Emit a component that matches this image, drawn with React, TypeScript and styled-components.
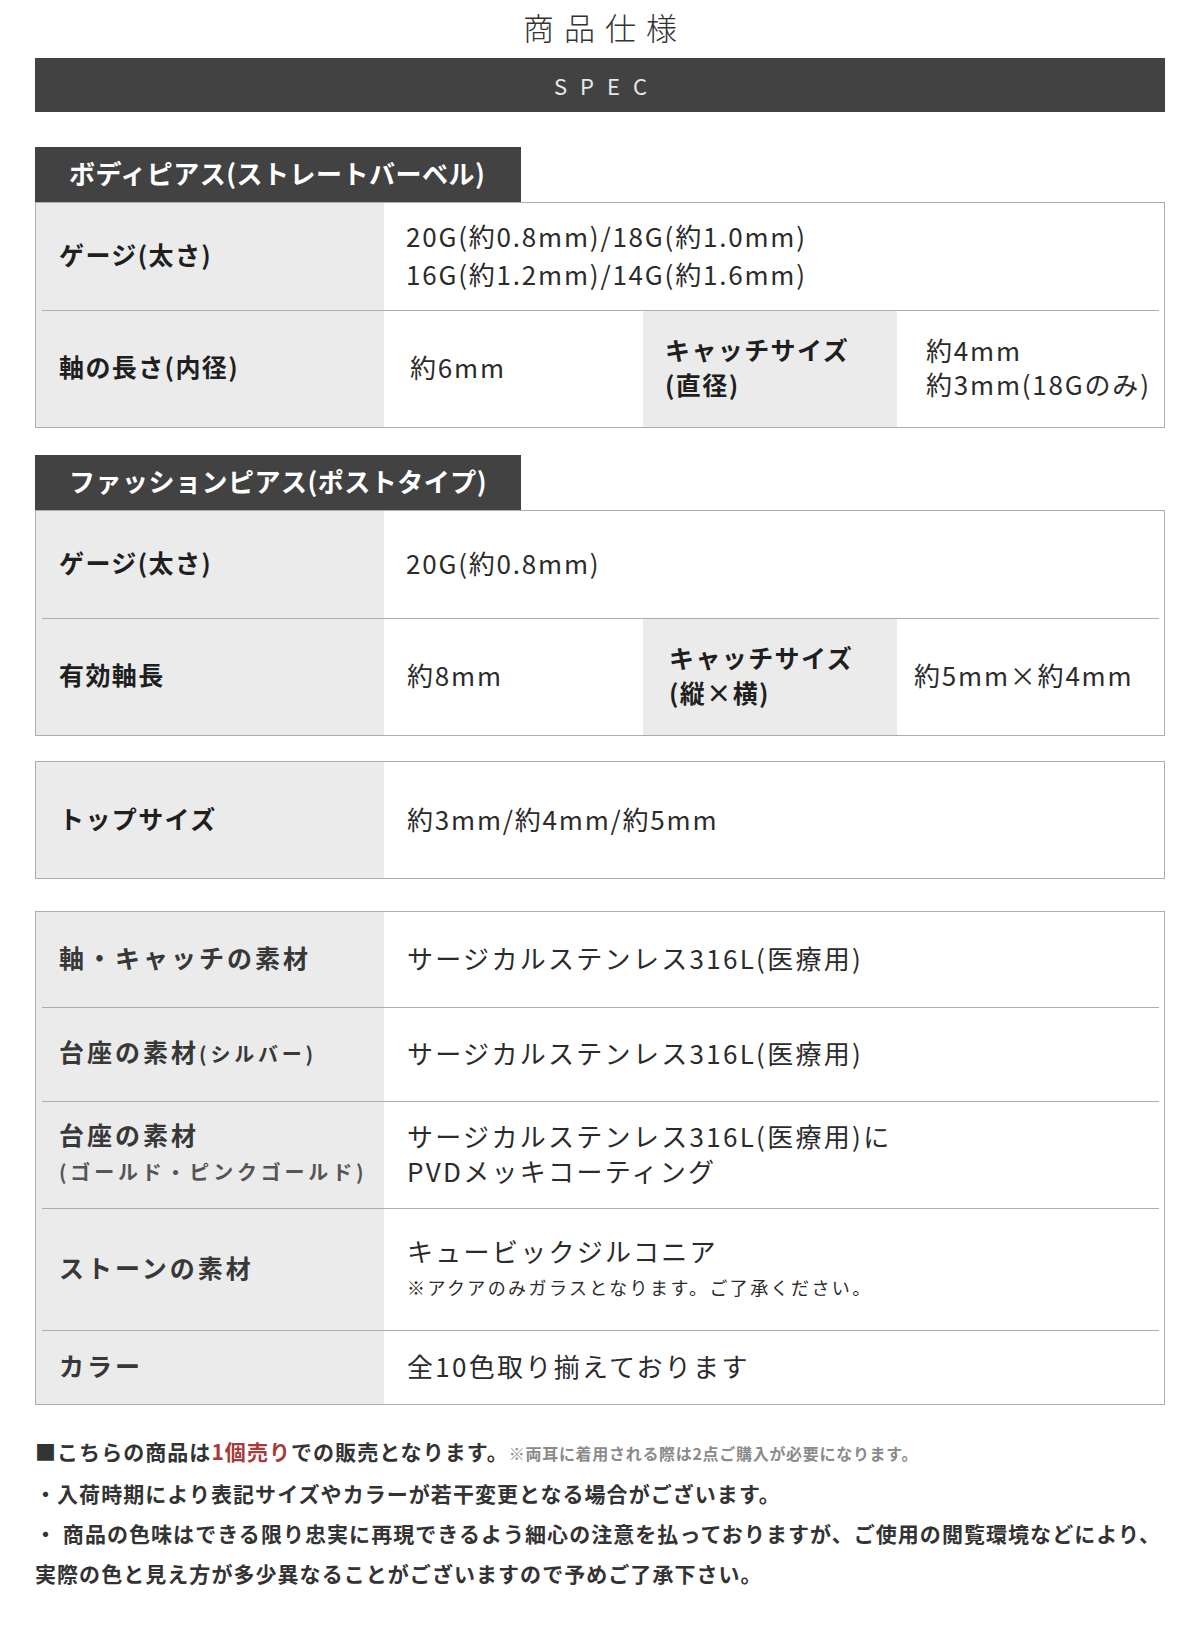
import React from 'react';
import styled, { createGlobalStyle } from 'styled-components';

const GlobalStyle = createGlobalStyle`
  body {
    margin: 0;
    background: #fff;
    font-family: 'Noto Sans CJK JP', 'Noto Sans', sans-serif;
    color: #222;
  }
`;

const Page = styled.div`
  width: 1200px;
  box-sizing: border-box;
  padding: 0 35px 40px;
`;

const Title = styled.h1`
  margin: 0;
  height: 58px;
  box-sizing: border-box;
  padding: 0 0 5px 10px;
  display: flex;
  align-items: center;
  justify-content: center;
  font-size: 31px;
  font-weight: 300;
  letter-spacing: 10px;
  color: #333;
`;

const SpecBar = styled.div`
  height: 54px;
  background: #424242;
  display: flex;
  align-items: center;
  justify-content: center;
  padding-left: 14px;
  font-size: 22px;
  font-weight: 400;
  letter-spacing: 13px;
  color: #e8e8e8;
`;

const SectionTab = styled.div<{ $top: number }>`
  margin-top: ${(p) => p.$top}px;
  width: 486px;
  height: 55px;
  box-sizing: border-box;
  padding: 0 0 4px 34px;
  display: flex;
  align-items: center;
  background: #424242;
  color: #fff;
  font-size: 26px;
  font-weight: 700;
  letter-spacing: 0.5px;
`;

const Table = styled.div<{ $top?: number }>`
  margin-top: ${(p) => p.$top ?? 0}px;
  border: 1px solid #adadad;
`;

const Row = styled.div<{ $h: number; $split?: boolean }>`
  position: relative;
  display: grid;
  grid-template-columns: ${(p) => (p.$split ? '348px 259px 254px 1fr' : '348px 1fr')};
  height: ${(p) => p.$h}px;

  &:not(:first-child)::before {
    content: '';
    position: absolute;
    top: 0;
    left: 6px;
    right: 5px;
    height: 1px;
    background: #adadad;
  }
`;

const Label = styled.div<{ $spaced?: boolean; $pad?: number }>`
  background: #ebebeb;
  display: flex;
  flex-direction: column;
  justify-content: center;
  padding: 0 0 4px ${(p) => p.$pad ?? 23}px;
  font-size: 25px;
  font-weight: 700;
  line-height: 35px;
  letter-spacing: ${(p) => (p.$spaced ? '3px' : '1.4px')};
  color: ${(p) => (p.$spaced ? '#383838' : '#1f1f1f')};
`;

const Small = styled.span<{ $muted?: boolean }>`
  font-size: 20px;
  letter-spacing: 3.8px;
  color: ${(p) => (p.$muted ? '#555' : 'inherit')};
`;

const Value = styled.div<{ $pad?: number; $lh?: number; $ls?: number }>`
  display: flex;
  flex-direction: column;
  justify-content: center;
  padding: 0 0 4px ${(p) => p.$pad ?? 23}px;
  font-size: 26px;
  font-weight: 400;
  line-height: ${(p) => p.$lh ?? 35}px;
  letter-spacing: ${(p) => p.$ls ?? 2.3}px;
  color: #2b2b2b;
`;

const Note = styled.div`
  margin-top: 4px;
  font-size: 18px;
  line-height: 30px;
  letter-spacing: 2.4px;
`;

const Notes = styled.div`
  margin-top: 26px;
  font-size: 21px;
  font-weight: 700;
  line-height: 40px;
  letter-spacing: 1.05px;
  color: #333;
  p {
    margin: 0;
  }
`;

const Red = styled.span`
  color: #a83a3a;
`;

const Aside = styled.span`
  font-size: 16px;
  color: #8a8a8a;
  letter-spacing: 0.7px;
`;

export default function App() {
  return (
    <>
      <GlobalStyle />
      <Page>
        <Title>商品仕様</Title>
        <SpecBar>SPEC</SpecBar>

        <SectionTab $top={35}>ボディピアス(ストレートバーベル)</SectionTab>
        <Table>
          <Row $h={107}>
            <Label>ゲージ(太さ)</Label>
            <Value $pad={22} $lh={38} $ls={1.8}>
              <div>20G(約0.8mm)/18G(約1.0mm)</div>
              <div>16G(約1.2mm)/14G(約1.6mm)</div>
            </Value>
          </Row>
          <Row $h={117} $split>
            <Label>軸の長さ(内径)</Label>
            <Value $pad={26} $ls={1.8}>約6mm</Value>
            <Label $pad={22}>
              <div>キャッチサイズ</div>
              <div>(直径)</div>
            </Label>
            <Value $pad={29} $lh={34} $ls={1.8}>
              <div>約4mm</div>
              <div>約3mm(18Gのみ)</div>
            </Value>
          </Row>
        </Table>

        <SectionTab $top={27}>ファッションピアス(ポストタイプ)</SectionTab>
        <Table>
          <Row $h={107}>
            <Label>ゲージ(太さ)</Label>
            <Value $pad={22} $ls={1.8}>20G(約0.8mm)</Value>
          </Row>
          <Row $h={117} $split>
            <Label>有効軸長</Label>
            <Value $ls={1.8}>約8mm</Value>
            <Label $pad={26}>
              <div>キャッチサイズ</div>
              <div>(縦×横)</div>
            </Label>
            <Value $pad={17} $ls={1.8}>約5mm×約4mm</Value>
          </Row>
        </Table>

        <Table $top={25}>
          <Row $h={116}>
            <Label>トップサイズ</Label>
            <Value $ls={1.8}>約3mm/約4mm/約5mm</Value>
          </Row>
        </Table>

        <Table $top={32}>
          <Row $h={95}>
            <Label $spaced>軸・キャッチの素材</Label>
            <Value>サージカルステンレス316L(医療用)</Value>
          </Row>
          <Row $h={94}>
            <Label $spaced>
              <div>
                台座の素材<Small>(シルバー)</Small>
              </div>
            </Label>
            <Value>サージカルステンレス316L(医療用)</Value>
          </Row>
          <Row $h={107}>
            <Label $spaced>
              <div>台座の素材</div>
              <div>
                <Small $muted>(ゴールド・ピンクゴールド)</Small>
              </div>
            </Label>
            <Value>
              <div>サージカルステンレス316L(医療用)に</div>
              <div>PVDメッキコーティング</div>
            </Value>
          </Row>
          <Row $h={122}>
            <Label $spaced>ストーンの素材</Label>
            <Value>
              <div>キュービックジルコニア</div>
              <Note>※アクアのみガラスとなります。ご了承ください。</Note>
            </Value>
          </Row>
          <Row $h={74}>
            <Label $spaced>カラー</Label>
            <Value>全10色取り揃えております</Value>
          </Row>
        </Table>

        <Notes>
          <p>
            ■こちらの商品は<Red>1個売り</Red>での販売となります。
            <Aside>※両耳に着用される際は2点ご購入が必要になります。</Aside>
          </p>
          <p>・入荷時期により表記サイズやカラーが若干変更となる場合がございます。</p>
          <p>・ 商品の色味はできる限り忠実に再現できるよう細心の注意を払っておりますが、ご使用の閲覧環境などにより、</p>
          <p>実際の色と見え方が多少異なることがございますので予めご了承下さい。</p>
        </Notes>
      </Page>
    </>
  );
}
